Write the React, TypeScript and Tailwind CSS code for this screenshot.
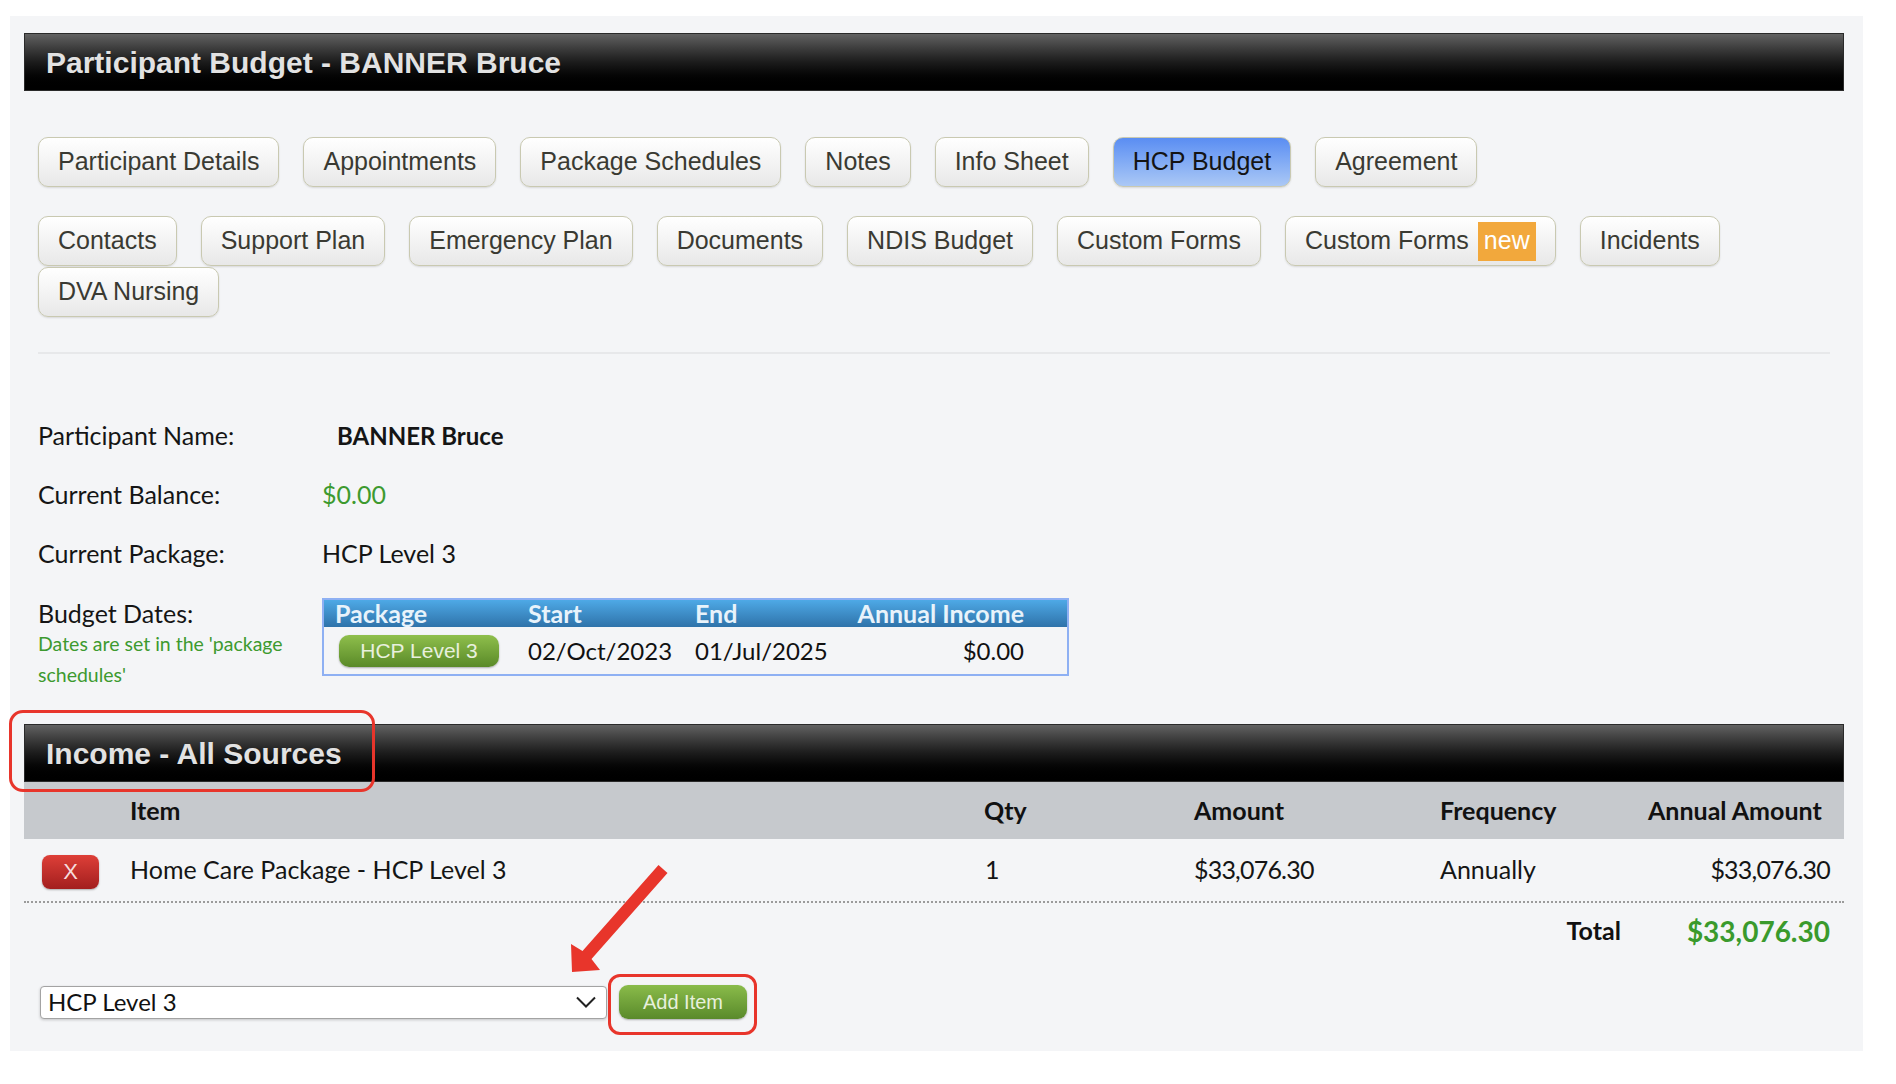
import React from 'react';

const tabRow1 = ['Participant Details', 'Appointments', 'Package Schedules', 'Notes', 'Info Sheet', 'HCP Budget', 'Agreement'];
const tabRow2 = ['Contacts', 'Support Plan', 'Emergency Plan', 'Documents', 'NDIS Budget', 'Custom Forms', 'Custom Forms new', 'Incidents', 'DVA Nursing'];

function Tab({ label }: { label: string }) {
  const active = label === 'HCP Budget';
  const isNew = label.endsWith(' new');
  const text = isNew ? label.replace(' new', '') : label;
  return (
    <button
      className={`h-[50px] px-[19px] flex items-center rounded-[10px] border border-[#c9c9b1] shadow-[0_1px_2px_rgba(0,0,0,0.12)] text-[25px] font-['Liberation_Sans',Arial,sans-serif] whitespace-nowrap ${
        active
          ? 'bg-linear-to-b from-[#5a8df2] to-[#abc8f5] text-[#141414]'
          : 'bg-linear-to-b from-white to-[#e8e8e8] text-[#3a3a32]'
      }`}
    >
      {text}
      {isNew && (
        <span className="ml-[9px] h-[39px] px-[6px] flex items-center bg-[#f2a83c] text-white">new</span>
      )}
    </button>
  );
}

function BlackBar({ title }: { title: string }) {
  return (
    <div className="h-[58px] flex items-center pl-[21px] border border-[#2a2a2a] bg-linear-to-b from-[#626262] via-[#1c1c1c] to-black">
      <span className="text-[30px] font-bold text-[#e2e2e2] font-['Liberation_Sans',Arial,sans-serif] [text-shadow:0_1px_1px_rgba(0,0,0,0.6)]">
        {title}
      </span>
    </div>
  );
}

const cols = 'grid grid-cols-[106px_854px_210px_246px_208px_1fr] pr-[14px]';

export default function App() {
  return (
    <div className="relative w-[1896px] h-[1084px] bg-white overflow-hidden font-['Lato',sans-serif]">
      <div className="ml-[10px] mt-[16px] w-[1853px] bg-[#f4f5f7] pt-[17px] pl-[14px] pr-[19px] pb-[32px]">
        <BlackBar title="Participant Budget - BANNER Bruce" />

        <div className="px-[14px]">
          <div className="mt-[46px] flex gap-x-[24px]">
            {tabRow1.map((t) => (
              <Tab key={t} label={t} />
            ))}
          </div>
          <div className="mt-[29px] flex flex-wrap gap-x-[24px] gap-y-[1px]">
            {tabRow2.map((t) => (
              <Tab key={t} label={t} />
            ))}
          </div>

          <div className="mt-[35px] h-[2px] bg-[#e7e8ea]" />

          <div className="mt-[52px] text-[25px] text-[#151515]">
            <div className="h-[59px] flex items-center">
              <div className="w-[284px]">Participant Name:</div>
              <div className="pl-[15px] font-bold text-[24px]">BANNER Bruce</div>
            </div>
            <div className="h-[59px] flex items-center">
              <div className="w-[284px]">Current Balance:</div>
              <div className="text-[#3d9a2f]">$0.00</div>
            </div>
            <div className="h-[59px] flex items-center">
              <div className="w-[284px]">Current Package:</div>
              <div>HCP Level 3</div>
            </div>
            <div className="pt-[15px] flex items-start">
              <div className="w-[284px]">
                <div className="leading-[30px]">Budget Dates:</div>
                <div className="text-[19.5px] leading-[31px] text-[#3d9a2f] w-[250px]">
                  Dates are set in the 'package schedules'
                </div>
              </div>
              <div className="w-[747px] border-2 border-[#8eb0f3]">
                <div className="h-[27px] grid grid-cols-[193px_167px_1fr_auto] items-center pl-[11px] pr-[43px] bg-linear-to-b from-[#4ea9e6] to-[#2f73aa] text-[25px] font-bold text-[#e8f3fb] leading-none">
                  <span>Package</span>
                  <span>Start</span>
                  <span>End</span>
                  <span>Annual Income</span>
                </div>
                <div className="h-[47px] grid grid-cols-[193px_167px_1fr_auto] items-center pl-[11px] pr-[43px] text-[24px] text-[#111]">
                  <span className="ml-[4px] w-[160px] h-[32px] flex items-center justify-center rounded-[10px] bg-linear-to-b from-[#8fbf4c] to-[#5a8a28] shadow-[0_1px_2px_rgba(0,0,0,0.3)] text-[21px] text-[#e8f0de] font-['Liberation_Sans',Arial,sans-serif]">
                    HCP Level 3
                  </span>
                  <span>02/Oct/2023</span>
                  <span>01/Jul/2025</span>
                  <span>$0.00</span>
                </div>
              </div>
            </div>
          </div>
        </div>

        <div className="mt-[34px]">
          <BlackBar title="Income - All Sources" />
          <div className={`${cols} h-[57px] items-center bg-[#c6c9cd] text-[25px] font-bold text-[#111]`}>
            <span />
            <span>Item</span>
            <span>Qty</span>
            <span>Amount</span>
            <span>Frequency</span>
            <span>Annual Amount</span>
          </div>
          <div className={`${cols} h-[64px] items-center text-[25px] text-[#151515] border-b-2 border-dotted border-[#9b9b9b]`}>
            <span className="pl-[18px]">
              <button className="w-[57px] h-[34px] rounded-[8px] bg-linear-to-b from-[#de3f38] to-[#a31e1e] shadow-[0_1px_2px_rgba(0,0,0,0.3)] text-[22px] text-[#f6dcdc] font-['Liberation_Sans',Arial,sans-serif]">
                X
              </button>
            </span>
            <span>Home Care Package - HCP Level 3</span>
            <span className="pl-[1px]">1</span>
            <span className="tracking-[-0.8px]">$33,076.30</span>
            <span>Annually</span>
            <span className="text-right tracking-[-0.8px]">$33,076.30</span>
          </div>
          <div className="h-[56px] flex items-center justify-end gap-[66px] pr-[14px]">
            <span className="text-[25px] font-bold text-[#111]">Total</span>
            <span className="text-[28px] font-bold text-[#3a9a2c]">$33,076.30</span>
          </div>

          <div className="mt-[26px] ml-[16px] flex items-center gap-[12px]">
            <div className="w-[567px] h-[33px] flex items-center justify-between pl-[7px] pr-[10px] bg-white border border-[#a3a3a3] rounded-[4px] shadow-[0_1px_3px_rgba(0,0,0,0.2)] text-[24px] text-[#111]">
              <span>HCP Level 3</span>
              <svg width="20" height="12" viewBox="0 0 20 12" fill="none">
                <path d="M1 1.5 L10 10.5 L19 1.5" stroke="#222" strokeWidth="2" />
              </svg>
            </div>
            <button className="w-[128px] h-[34px] rounded-[9px] bg-linear-to-b from-[#8abc4a] to-[#5a8a2b] shadow-[0_1px_2px_rgba(0,0,0,0.3)] text-[20px] text-[#e8f0dc] font-['Liberation_Sans',Arial,sans-serif]">
              Add Item
            </button>
          </div>
        </div>
      </div>

      {/* annotation overlays */}
      <div className="absolute left-[9px] top-[710px] w-[366px] h-[82px] border-[3px] border-[#e8352b] rounded-[14px] pointer-events-none" />
      <div className="absolute left-[608px] top-[974px] w-[149px] h-[61px] border-[3px] border-[#e8352b] rounded-[12px] pointer-events-none" />
      <svg className="absolute left-0 top-0 pointer-events-none" width="1896" height="1084">
        <polygon
          points="658.5,865.1 667.5,872.9 591.5,958.9 600,970 572,972 571,944 582.5,951.1"
          fill="#e8352b"
        />
      </svg>
    </div>
  );
}
